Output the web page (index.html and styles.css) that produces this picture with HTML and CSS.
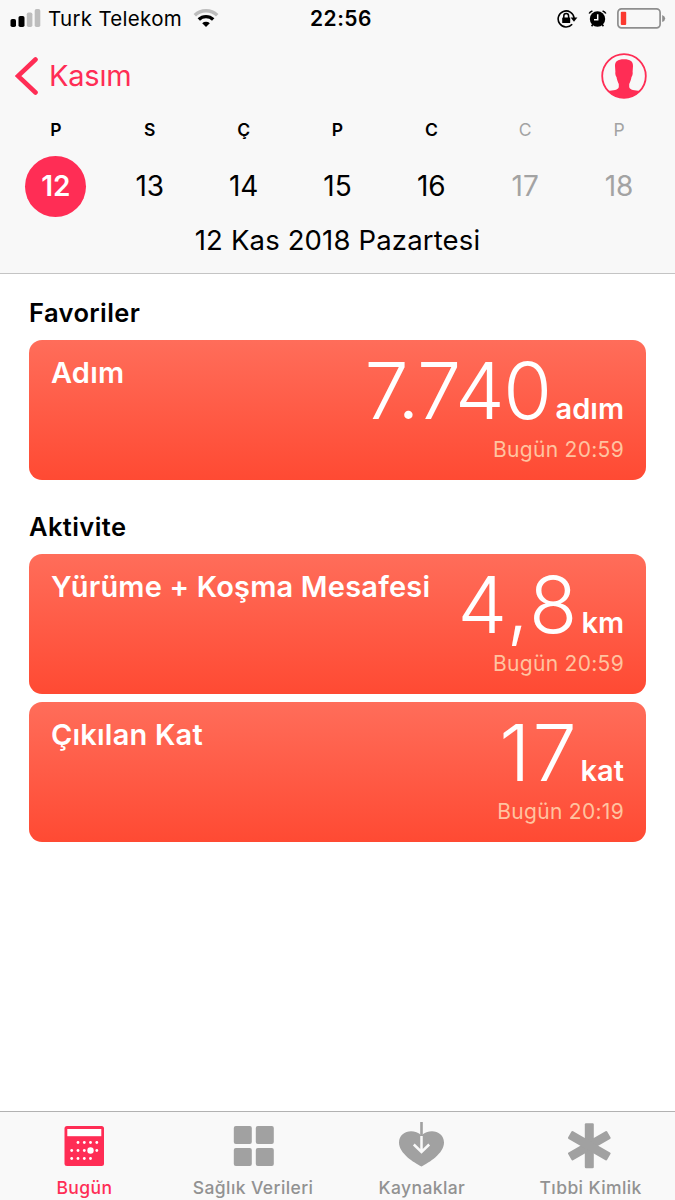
FILE: index.html
```html
<!DOCTYPE html>
<html lang="tr">
  <head>
    <meta charset="UTF-8" />
    <meta name="viewport" content="width=device-width, initial-scale=1.0" />
    <title>Sağlık</title>
    <link rel="stylesheet" href="styles.css">
  </head>
  <body>
    <header class="header">
      <div class="status">
        <div class="status-left">
          <svg class="signal" width="31" height="19" viewBox="0 0 31 19">
            <rect x="0.5" y="10" width="5.5" height="8" rx="1.8" />
            <rect x="8.5" y="7" width="6" height="11" rx="1.8" />
            <rect x="16.8" y="3.5" width="5.6" height="14.5" rx="1.8" fill="#bdbdbd" />
            <rect x="24.7" y="0" width="5.6" height="18" rx="1.8" fill="#bdbdbd" />
          </svg>
          <span class="carrier">Turk Telekom</span>
          <svg class="wifi" width="26" height="19" viewBox="0 0 26 19">
            <g fill="none" stroke="#000" stroke-width="3.4">
              <path d="M1.8 6.3A16 16 0 0 1 24.2 6.3" stroke="#bdbdbd" />
              <path d="M5.8 10.5a10.4 10.4 0 0 1 14.4 0" />
            </g>
            <path d="M9.2 14.2a5.6 5.6 0 0 1 7.6 0L13 18z" />
          </svg>
        </div>
        <span class="clock">22:56</span>
        <div class="status-right">
          <svg width="21" height="20" viewBox="0 0 21 20">
            <path d="M15.2 15.2A8 8 0 1 1 17.1 9" fill="none" stroke="#000" stroke-width="1.6" />
            <path d="M13.6 8.5h6.8l-3.4 4.2z" />
            <rect x="5.2" y="8.5" width="8" height="5.6" rx="0.6" />
            <path d="M6.8 9V7a2.4 2.4 0 0 1 4.8 0v2" fill="none" stroke="#000" stroke-width="1.5" />
          </svg>
          <svg width="19" height="18" viewBox="0 0 19 18">
            <circle cx="9.5" cy="9" r="7.7" />
            <path d="M1.2 3.5Q2 1.8 4.4 1M17.8 3.5Q17 1.8 14.6 1M4.8 14.5l-1.2 1.7M14.2 14.5l1.2 1.7" fill="none" stroke="#000" stroke-width="1.6" />
            <path d="M9.7 4.3v5.4H6" fill="none" stroke="#fff" stroke-width="1.5" />
          </svg>
          <svg width="49" height="21" viewBox="0 0 49 21">
            <rect x="0.9" y="0.9" width="42.2" height="19" rx="3.6" fill="none" stroke="#8e8e8e" stroke-width="1.7" />
            <rect x="3.8" y="3.8" width="5.4" height="13.2" rx="1" fill="#fb3a30" />
            <path d="M45.2 7q3 1.2 3 3.5t-3 3.5z" fill="#8e8e8e" />
          </svg>
        </div>
      </div>

      <nav class="nav">
        <a class="back">
          <svg width="23" height="38" viewBox="0 0 23 38">
            <path d="M20.5 2.5L3 19l17.5 16.5" fill="none" stroke="#ff2d55" stroke-width="4.6" stroke-linecap="round" />
          </svg>
          <span>Kasım</span>
        </a>
        <svg class="profile" width="46" height="46" viewBox="0 0 46 46">
          <circle cx="23" cy="23" r="21.8" fill="none" stroke="#ff2d55" stroke-width="1.8" />
          <path d="M23 6.3C29.5 6.3 32 8.5 32 13L31.6 19C32 20 31.4 23 30.5 24C30 27 29 29.5 28.2 31V34C28.5 37 34 37.6 39 37.8A22 22 0 0 1 7 37.8C12 37.6 17.5 37 17.8 34V31C17 29.5 16 27 15.5 24C14.6 23 14 20 14.4 19L14 13C14 8.500 16.500 6.300 23 6.300z" fill="#ff2d55" />
        </svg>
      </nav>

      <div class="week weekdays">
        <span>P</span>
        <span>S</span>
        <span>Ç</span>
        <span>P</span>
        <span>C</span>
        <span class="off">C</span>
        <span class="off">P</span>
      </div>
      <div class="week days">
        <span class="selected">12</span>
        <span>13</span>
        <span>14</span>
        <span>15</span>
        <span>16</span>
        <span class="off">17</span>
        <span class="off">18</span>
      </div>
      <div class="date">12 Kas 2018 Pazartesi</div>
    </header>

    <main class="content">
      <h2 class="heading">Favoriler</h2>
      <section class="cards">
        <article class="card">
          <h3 class="title">Adım</h3>
          <div class="reading">
            <p class="value"><span class="number long">7.740</span><span class="unit">adım</span></p>
            <p class="time">Bugün 20:59</p>
          </div>
        </article>
      </section>

      <h2 class="heading">Aktivite</h2>
      <section class="cards">
        <article class="card">
          <h3 class="title">Yürüme + Koşma Mesafesi</h3>
          <div class="reading">
            <p class="value"><span class="number">4,8</span><span class="unit">km</span></p>
            <p class="time">Bugün 20:59</p>
          </div>
        </article>
        <article class="card">
          <h3 class="title">Çıkılan Kat</h3>
          <div class="reading">
            <p class="value"><span class="number">17</span><span class="unit">kat</span></p>
            <p class="time">Bugün 20:19</p>
          </div>
        </article>
      </section>
    </main>

    <footer class="tabs">
      <a class="tab active">
        <svg width="46" height="48" viewBox="0 0 46 48">
          <rect x="3.5" y="4" width="39.5" height="40" rx="2.5" fill="#ff2d55" />
          <rect x="6.3" y="7" width="34" height="7.2" fill="#fff" />
          <g fill="#fff">
            <circle cx="17" cy="20.5" r="1.4" />
            <circle cx="23.3" cy="20.5" r="1.4" />
            <circle cx="29.5" cy="20.5" r="1.4" />
            <circle cx="35.8" cy="20.5" r="1.4" />
            <circle cx="10.7" cy="28.5" r="1.4" />
            <circle cx="17" cy="28.5" r="1.4" />
            <circle cx="23.3" cy="28.5" r="1.4" />
            <circle cx="29.5" cy="28.5" r="3.2" />
            <circle cx="35.8" cy="28.5" r="1.4" />
            <circle cx="10.7" cy="36.5" r="1.4" />
            <circle cx="17" cy="36.5" r="1.4" />
            <circle cx="23.3" cy="36.5" r="1.4" />
            <circle cx="29.5" cy="36.5" r="1.4" />
          </g>
        </svg>
        <span>Bugün</span>
      </a>
      <a class="tab">
        <svg width="46" height="48" viewBox="0 0 46 48" fill="#a1a1a1">
          <rect x="3.8" y="4" width="18" height="18" rx="2" />
          <rect x="25.8" y="4" width="18" height="18" rx="2" />
          <rect x="3.8" y="26" width="18" height="18" rx="2" />
          <rect x="25.8" y="26" width="18" height="18" rx="2" />
        </svg>
        <span>Sağlık Verileri</span>
      </a>
      <a class="tab">
        <svg width="46" height="48" viewBox="0 0 46 48">
          <path d="M22.5 44.5C15 40.5 0 31.5 0 20.5 0 9.5 14 5.500 22.5 13.5 31 5.500 45 9.5 45 20.5 45 31.5 30 40.5 22.5 44.5z" fill="#a1a1a1" />
          <path d="M22.5 14V29M14.8 22.5l7.7 7.5 7.7-7.5" fill="none" stroke="#f9f9f9" stroke-width="2.5" />
          <path d="M22.5 0v14" stroke="#a1a1a1" stroke-width="2.6" />
        </svg>
        <span>Kaynaklar</span>
      </a>
      <a class="tab">
        <svg width="46" height="48" viewBox="0 0 46 48" fill="#a1a1a1">
          <rect x="16.8" y="1.2" width="9" height="45" rx="1.2" />
          <rect x="16.8" y="1.2" width="9" height="45" rx="1.2" transform="rotate(60 21.3 23.7)" />
          <rect x="16.8" y="1.2" width="9" height="45" rx="1.2" transform="rotate(-60 21.3 23.7)" />
        </svg>
        <span>Tıbbi Kimlik</span>
      </a>
    </footer>
  </body>
</html>
```
FILE: styles.css
```css
* {
  box-sizing: border-box;
}
body {
  margin: 0;
  height: 1200px;
  display: flex;
  flex-direction: column;
  background-color: #fff;
  color: #000;
  font-family: Inter, "Liberation Sans", sans-serif;
}
h2,
h3,
p {
  margin: 0;
}
svg {
  display: block;
}
.header {
  height: 274px;
  background-color: #f8f8f8;
  border-bottom: 1px solid #c4c4c4;
}
.status {
  height: 37px;
  padding: 0 10px;
  display: grid;
  grid-template-columns: 1fr auto 1fr;
  align-items: center;
}
.status-left {
  display: flex;
  align-items: center;
}
.carrier {
  margin: 0 11px 0 7px;
  font-size: 20.5px;
  letter-spacing: 0.3px;
}
.clock {
  margin-left: 7px;
  font-size: 21px;
  font-weight: 600;
  letter-spacing: 0.5px;
}
.status-right {
  margin-right: -1px;
  display: flex;
  justify-content: flex-end;
  align-items: center;
  gap: 10px;
}
.nav {
  height: 77px;
  padding: 0 28px 0 15px;
  display: flex;
  justify-content: space-between;
  align-items: center;
}
.back {
  display: flex;
  align-items: center;
  gap: 11px;
  color: #ff2d55;
  font-size: 29px;
  letter-spacing: -0.2px;
}
.week {
  padding: 0 9px;
  display: grid;
  grid-template-columns: repeat(7, 1fr);
  place-items: center;
}
.weekdays {
  height: 30px;
  font-size: 17.5px;
  font-weight: 600;
}
.days {
  height: 85px;
  font-size: 28px;
  line-height: 35px;
}
.off {
  color: #a3a3a3;
  font-weight: 400;
}
.selected {
  width: 61px;
  height: 61px;
  border-radius: 50%;
  background-color: #ff2d55;
  color: #fff;
  font-weight: 600;
  line-height: 61px;
  text-align: center;
}
.date {
  font-size: 27.5px;
  line-height: 23px;
  letter-spacing: 0.15px;
  text-align: center;
}
.content {
  flex: 1;
  padding: 12px 29px 0;
}
.heading {
  font-size: 25.5px;
  font-weight: 600;
  line-height: 54px;
  letter-spacing: 0.4px;
}
.cards {
  margin-bottom: 20px;
  display: flex;
  flex-direction: column;
  gap: 7.5px;
}
.card {
  height: 140px;
  padding: 0 22px;
  display: flex;
  justify-content: space-between;
  border-radius: 13px;
  background: linear-gradient(#ff6d5a, #ff4a33);
  color: #fff;
}
.title {
  font-size: 29px;
  font-weight: 600;
  line-height: 66px;
  letter-spacing: 0.2px;
}
.reading {
  text-align: right;
}
.value {
  height: 95px;
  line-height: 101px;
  white-space: nowrap;
}
.number {
  font-size: 79px;
  font-weight: 300;
  letter-spacing: 2px;
}
.long {
  margin-right: 3px;
  letter-spacing: -1.5px;
}
.unit {
  margin-left: 2px;
  font-size: 29px;
  font-weight: 600;
}
.time {
  color: #ffc3a0;
  font-size: 21px;
  line-height: 30px;
  letter-spacing: 0.3px;
}
.tabs {
  height: 89px;
  padding-top: 10px;
  display: grid;
  grid-template-columns: repeat(4, 1fr);
  background-color: #f9f9f9;
  border-top: 1px solid #b2b2b2;
}
.tab {
  display: flex;
  flex-direction: column;
  align-items: center;
  gap: 6px;
  color: #929292;
  font-size: 17.5px;
  font-weight: 500;
  line-height: 23px;
  letter-spacing: 0.4px;
}
.active {
  color: #ff2d55;
}
```
